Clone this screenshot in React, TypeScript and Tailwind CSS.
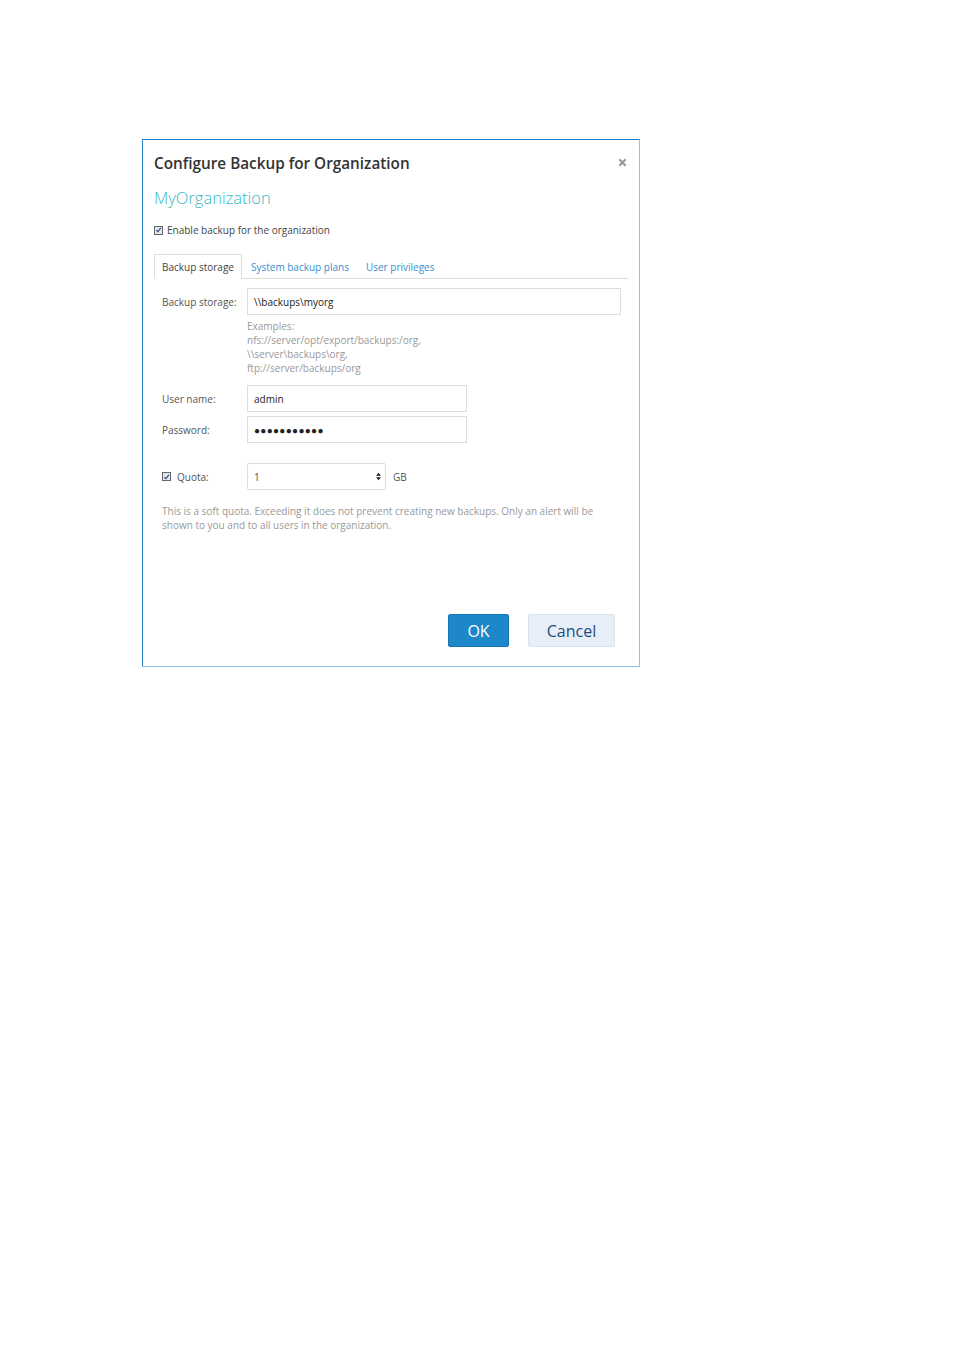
import React from "react";

const font = { fontFamily: '"Open Sans", "Noto Sans", sans-serif' };

function Check() {
  return (
    <span className="inline-flex h-[9px] w-[9px] items-center justify-center border border-[#666] bg-[#dfe6f0]">
      <svg viewBox="0 0 10 10" className="h-[8px] w-[8px]">
        <path d="M2 5.2 L4.2 7.5 L8.2 2" fill="none" stroke="#2a3f7a" strokeWidth="1.6" />
      </svg>
    </span>
  );
}

export default function App() {
  return (
    <div className="min-h-[1350px] w-[955px] bg-white" style={font}>
      <div className="pl-[142px] pt-[139px]">
        <div className="flex h-[528px] w-[498px] flex-col border-l border-t border-l-[#2a86c8] border-t-[#1e80c4] border-r border-b border-r-[#8cc0e4] border-b-[#8cc0e4] px-[11px]">
          <div className="flex items-start justify-between pt-[12px]">
            <div className="text-[15.3px] font-semibold leading-[22px] text-[#333]">
              Configure Backup for Organization
            </div>
            <svg viewBox="0 0 10 10" className="mr-[1px] mt-[6px] h-[9px] w-[9px]">
              <path d="M1.5 1.5 L8.5 8.5 M8.5 1.5 L1.5 8.5" stroke="#9a9a9a" strokeWidth="2.4" />
            </svg>
          </div>
          <div className="mt-[13px] text-[16.5px] font-light leading-[22px] text-[#36b9c4]">MyOrganization</div>
          <div className="mt-[14px] flex items-center gap-[4px] text-[10px] leading-[14px] text-[#444]">
            <Check />
            <span>Enable backup for the organization</span>
          </div>
          <div className="mt-[17px] flex items-end border-b border-[#ddd] text-[10px] leading-[14px]">
            <div className="-mb-px border border-b-white border-[#ddd] bg-white px-[7px] pb-[4px] pt-[5px] text-[#444]">
              Backup storage
            </div>
            <div className="px-[9px] pb-[4px] pt-[5px] text-[#3b8ed0]">System backup plans</div>
            <div className="px-[8px] pb-[4px] pt-[5px] text-[#3b8ed0]">User privileges</div>
          </div>
          <div className="pl-[8px] pr-[7px] text-[10px] leading-[14px]">
            <div className="mt-[9px] flex items-center">
              <div className="w-[85px] text-[#555]">Backup storage:</div>
              <div className="flex h-[27px] flex-1 items-center border border-[#ddd] px-[6px] text-[#222]">
                \\backups\myorg
              </div>
            </div>
            <div className="ml-[85px] mt-[4px] text-[#999]">
              <div>Examples:</div>
              <div>nfs://server/opt/export/backups:/org,</div>
              <div>\\server\backups\org,</div>
              <div>ftp://server/backups/org</div>
            </div>
            <div className="mt-[10px] flex items-center">
              <div className="w-[85px] text-[#555]">User name:</div>
              <div className="flex h-[27px] w-[220px] items-center border border-[#ddd] px-[6px] text-[#222]">admin</div>
            </div>
            <div className="mt-[4px] flex items-center">
              <div className="w-[85px] text-[#555]">Password:</div>
              <div className="flex h-[27px] w-[220px] items-center border border-[#ddd] px-[6px] text-[#222] tracking-[0.3px]">
                ●●●●●●●●●●●
              </div>
            </div>
            <div className="mt-[20px] flex items-center">
              <div className="flex w-[85px] items-center gap-[6px] text-[#555]">
                <Check />
                <span>Quota:</span>
              </div>
              <div className="flex h-[27px] w-[139px] items-center justify-between rounded-[2px] border border-[#ddd] pl-[6px] pr-[4px] text-[#555]">
                <span>1</span>
                <svg viewBox="0 0 6 10" className="h-[9px] w-[5px]">
                  <path d="M0 4 L3 0.5 L6 4 Z M0 6 L3 9.5 L6 6 Z" fill="#222" />
                </svg>
              </div>
              <span className="ml-[7px] text-[#555]">GB</span>
            </div>
            <div className="mt-[14px] text-[#999]">
              This is a soft quota. Exceeding it does not prevent creating new backups. Only an alert will be
              <br />
              shown to you and to all users in the organization.
            </div>
          </div>
          <div className="flex-1" />
          <div className="mb-[19px] flex justify-end gap-[19px] pr-[13px]">
            <button className="h-[33px] w-[61px] rounded-[2px] border border-[#1675b5] bg-[#1c87c9] text-[16px] text-white">
              OK
            </button>
            <button className="h-[33px] w-[87px] rounded-[2px] border border-[#dae2ee] bg-[#e8eef7] text-[16px] text-[#1d4d7a]">
              Cancel
            </button>
          </div>
        </div>
      </div>
    </div>
  );
}
